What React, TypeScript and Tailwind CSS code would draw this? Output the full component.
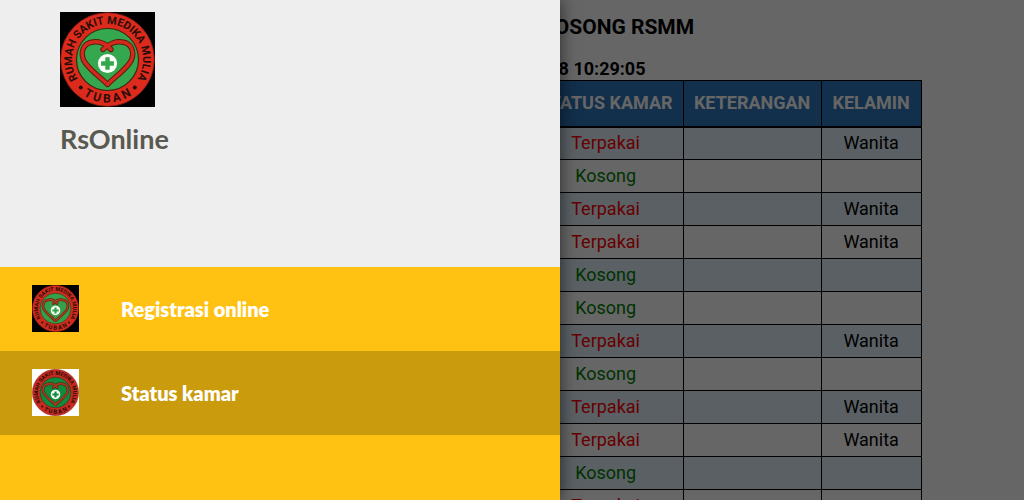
import React from "react";

type LogoProps = { id: string; className: string; backdrop: string; green: string; red: string; heart: string };

function Logo({ id, className, backdrop, green, red, heart }: LogoProps) {
  return (
    <svg viewBox="0 0 95 95" className={className} role="img" aria-label="Logo Rumah Sakit Medika Mulia">
      <defs>
        <path id={`${id}-top`} d="M22.4 72.6 A35.5 35.5 0 1 1 72.6 72.6" />
        <path id={`${id}-bottom`} d="M6 60 A43.5 43.5 0 0 0 89 60" />
      </defs>
      <rect width="95" height="95" fill={backdrop} />
      <circle cx="47.5" cy="47.5" r="46.8" fill={red} stroke="#7d1d14" strokeWidth="0.8" />
      <circle cx="47.5" cy="47.5" r="31" fill={green} stroke="#3a2a12" strokeWidth="1.2" />
      <g fill="#2a0d08" fontFamily="Roboto, sans-serif" fontWeight="700" textAnchor="middle">
        <text fontSize="11">
          <textPath href={`#${id}-top`} startOffset="50%">RUMAH SAKIT MEDIKA MULIA</textPath>
        </text>
        <text fontSize="12">
          <textPath href={`#${id}-bottom`} startOffset="50%">T U B A N</textPath>
        </text>
      </g>
      <circle cx="20.8" cy="75.6" r="2" fill="#2a0d08" />
      <circle cx="74.8" cy="75.6" r="2" fill="#2a0d08" />
      <g fill="none" strokeLinecap="round" strokeLinejoin="round">
        <path
          d="M51 37.5 C46 31 38 29 33 30 C23 31 20.5 40 23.5 48 C28 57 39 64 47.5 72.5 C56 64 67 57 71.5 48 C74.5 40 72 31 62 30 C57 29 49 31 43 37.5"
          stroke="#5b1c10"
          strokeWidth="5.4"
        />
        <path
          d="M51 37.5 C46 31 38 29 33 30 C23 31 20.5 40 23.5 48 C28 57 39 64 47.5 72.5 C56 64 67 57 71.5 48 C74.5 40 72 31 62 30 C57 29 49 31 43 37.5"
          stroke={heart}
          strokeWidth="3.4"
        />
      </g>
      <circle cx="47.5" cy="51.5" r="9.6" fill="#fafff8" />
      <path d="M45.3 45.3h4.4v4h4.2v4.4h-4.2v4h-4.4v-4h-4.2v-4.4h4.2z" fill={green} />
    </svg>
  );
}

const rooms = [
  { used: true, gender: "Wanita" },
  { used: false, gender: "" },
  { used: true, gender: "Wanita" },
  { used: true, gender: "Wanita" },
  { used: false, gender: "" },
  { used: false, gender: "" },
  { used: true, gender: "Wanita" },
  { used: false, gender: "" },
  { used: true, gender: "Wanita" },
  { used: true, gender: "Wanita" },
  { used: false, gender: "" },
  { used: true, gender: "" },
];

export default function App() {
  return (
    <div className="relative h-screen overflow-hidden bg-white font-['Roboto',sans-serif] text-black">
      <main className="px-[10%] pt-3">
        <h1 className="text-center text-[21px] leading-[30px] font-bold">DATA RUANG KAMAR KOSONG RSMM</h1>
        <p className="mt-4 text-center text-[18px] leading-[22px] font-bold">Diperbarui: 12-07-2018 10:29:05</p>
        <table className="w-full table-fixed border-collapse border border-black text-center text-[18px] leading-6">
          <thead>
            <tr className="h-[46px] border-b-2 border-black bg-[#2d76bc] text-white">
              <th className="border-r border-black">KAMAR</th>
              <th className="w-[155px] border-r border-black">STATUS KAMAR</th>
              <th className="w-[138px] border-r border-black">KETERANGAN</th>
              <th className="w-[100px]">KELAMIN</th>
            </tr>
          </thead>
          <tbody>
            {rooms.map((room, i) => (
              <tr key={i} className="h-[33px] odd:bg-[#e1f0fa]">
                <td className="border border-black"></td>
                <td className={room.used ? "border border-black text-[#ff0000]" : "border border-black text-[#008000]"}>
                  {room.used ? "Terpakai" : "Kosong"}
                </td>
                <td className="border border-black"></td>
                <td className="border border-black">{room.gender}</td>
              </tr>
            ))}
          </tbody>
        </table>
      </main>

      <div className="absolute inset-0 bg-black/60" />

      <aside className="absolute inset-y-0 left-0 flex w-[560px] max-w-full flex-col bg-[#ffc212] font-['Lato',sans-serif] font-bold shadow-[0_0_16px_rgba(0,0,0,0.6)]">
        <header className="h-[267px] bg-[#eeeeee] px-[60px] pt-3">
          <Logo id="brand" className="size-[95px]" backdrop="#000000" green="#35a84f" red="#dc2b1c" heart="#d32a1c" />
          <h2 className="mt-3.5 text-[27px] leading-9 text-[#595950]">RsOnline</h2>
        </header>
        <nav className="flex flex-col text-[20px] font-extrabold text-white">
          <a href="#registrasi" className="flex items-center gap-[42px] px-8 pt-[18px] pb-[19px]">
            <Logo id="register" className="size-[47px]" backdrop="#000000" green="#35a04a" red="#cf2c1e" heart="#a83a20" />
            <span>Registrasi online</span>
          </a>
          <a href="#status" aria-current="page" className="flex items-center gap-[42px] bg-[#cb9b0e] px-8 pt-[18px] pb-[19px]">
            <Logo id="status" className="size-[47px]" backdrop="#ffffff" green="#108a3c" red="#c42a20" heart="#a83a20" />
            <span>Status kamar</span>
          </a>
        </nav>
      </aside>
    </div>
  );
}
